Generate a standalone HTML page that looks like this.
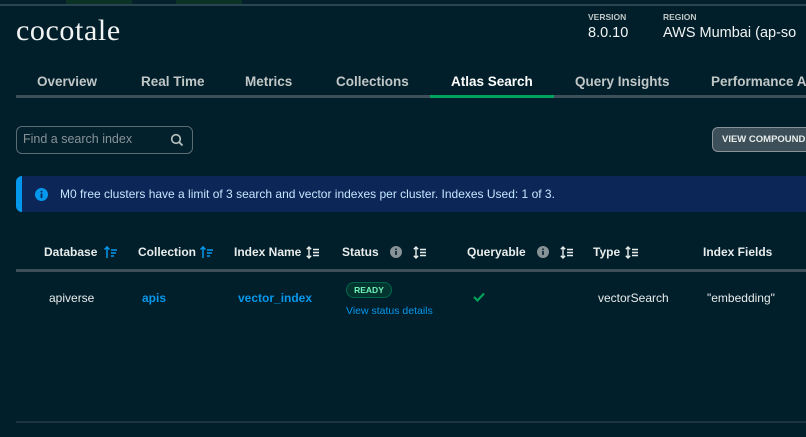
<!DOCTYPE html>
<html style="overflow:hidden"><head><meta charset="utf-8"><style>
*{margin:0;padding:0;box-sizing:border-box}
body{width:806px;height:437px;overflow:hidden;background:#011e2b;font-family:"Liberation Sans",sans-serif;color:#e8edeb}
#r{position:relative;width:806px;height:437px;overflow:hidden}
.a{position:absolute;white-space:nowrap}
.tab{position:absolute;white-space:nowrap;top:74px;font-size:13.5px;font-weight:bold;color:#c1c7c6}
.th{position:absolute;white-space:nowrap;top:245px;font-size:12px;font-weight:bold;color:#e8edeb}
.td{position:absolute;white-space:nowrap;top:291px;font-size:12px;color:#e8edeb}
.link{color:#0498ec;font-weight:bold}
.s{position:absolute}
</style></head><body><div id="r">
<div class="a" style="left:0;top:0;width:806px;height:4px;background:#04202c"></div>
<div class="a" style="left:66px;top:0;width:66px;height:4px;background:#0a3326"></div>
<div class="a" style="left:176px;top:0;width:66px;height:4px;background:#0a3326"></div>
<div class="a" style="left:0;top:4px;width:806px;height:2px;background:#2a4450"></div>

<div class="a" style="left:16px;top:14px;font-family:'Liberation Serif',serif;font-size:30px;letter-spacing:0.6px;color:#f2f4f3">cocotale</div>
<div class="a" style="left:588px;top:12px;font-size:8.5px;font-weight:bold;color:#c1c7c6">VERSION</div>
<div class="a" style="left:663px;top:12px;font-size:8.5px;font-weight:bold;color:#c1c7c6">REGION</div>
<div class="a" style="left:588px;top:25px;font-size:14.5px;color:#f2f4f3">8.0.10</div>
<div class="a" style="left:663px;top:25px;width:143px;overflow:hidden;font-size:14.5px;color:#f2f4f3">AWS Mumbai (ap-so</div>

<div class="tab" style="left:37px">Overview</div>
<div class="tab" style="left:141px">Real Time</div>
<div class="tab" style="left:245px">Metrics</div>
<div class="tab" style="left:336px">Collections</div>
<div class="tab" style="left:451px;color:#fff">Atlas Search</div>
<div class="tab" style="left:575px">Query Insights</div>
<div class="tab" style="left:711px;width:95px;overflow:hidden">Performance A</div>
<div class="a" style="left:16px;top:95px;width:790px;height:3px;background:#3d4f58"></div>
<div class="a" style="left:430px;top:95px;width:124px;height:3px;background:#00a35c"></div>

<div class="a" style="left:16px;top:126px;width:177px;height:28px;border:1px solid #5c6c75;border-radius:6px;background:#03202d"></div>
<div class="a" style="left:23px;top:132px;font-size:12.5px;color:#889397">Find a search index</div>
<svg class="a" style="left:170px;top:133px" width="14" height="14" viewBox="0 0 14 14"><circle cx="6" cy="6" r="4.3" fill="none" stroke="#b8c4c2" stroke-width="1.6"/><path d="M9 9l3.5 3.5" stroke="#b8c4c2" stroke-width="1.8"/></svg>

<div class="a" style="left:712px;top:127px;width:94px;height:25px;border:1px solid #889397;border-right:none;border-radius:6px 0 0 6px;background:#3d4f58;overflow:hidden"><span style="position:absolute;left:9px;top:6px;font-size:9.5px;font-weight:bold;color:#e8edeb">VIEW COMPOUND (</span></div>

<div class="a" style="left:16px;top:176px;width:790px;height:36px;background:#0c2657;border-radius:6px 0 0 6px;border-left:6px solid #0498ec"></div>
<svg class="a" style="left:35px;top:188px" width="13" height="13" viewBox="0 0 13 13"><circle cx="6.5" cy="6.5" r="6.5" fill="#0498ec"/><rect x="5.6" y="5.5" width="1.8" height="4.5" fill="#0c2657"/><circle cx="6.5" cy="3.6" r="1" fill="#0c2657"/></svg>
<div class="a" style="left:60px;top:187px;font-size:12px;color:#c3e7fe">M0 free clusters have a limit of 3 search and vector indexes per cluster. Indexes Used: 1 of 3.</div>

<div class="th" style="left:44px">Database</div>
<svg class="s" style="left:104px;top:246px" width="14" height="13" viewBox="0 0 14 13"><path d="M3 12V1M0.5 3.5L3 1l2.5 2.5" fill="none" stroke="#0498ec" stroke-width="1.5"/><path d="M7 4h6M7 7h5M7 10h3" stroke="#0498ec" stroke-width="1.5"/></svg>
<div class="th" style="left:138px">Collection</div>
<svg class="s" style="left:200px;top:246px" width="14" height="13" viewBox="0 0 14 13"><path d="M3 12V1M0.5 3.5L3 1l2.5 2.5" fill="none" stroke="#0498ec" stroke-width="1.5"/><path d="M7 4h6M7 7h5M7 10h3" stroke="#0498ec" stroke-width="1.5"/></svg>
<div class="th" style="left:234px">Index Name</div>
<svg class="s" style="left:306px;top:246px" width="14" height="13" viewBox="0 0 14 13"><path d="M3 1v11M0.8 3.2L3 1l2.2 2.2M0.8 9.8L3 12l2.2-2.2" fill="none" stroke="#e8edeb" stroke-width="1.4"/><path d="M7 3.5h6M7 6.5h6M7 9.5h6" stroke="#e8edeb" stroke-width="1.4"/></svg>
<div class="th" style="left:342px">Status</div>
<svg class="a" style="left:390px;top:246px" width="12" height="12"><circle cx="6" cy="6" r="6" fill="#889397"/><rect x="5.2" y="5" width="1.6" height="4" fill="#011e2b"/><circle cx="6" cy="3.3" r="0.9" fill="#011e2b"/></svg>
<svg class="s" style="left:413px;top:246px" width="14" height="13" viewBox="0 0 14 13"><path d="M3 1v11M0.8 3.2L3 1l2.2 2.2M0.8 9.8L3 12l2.2-2.2" fill="none" stroke="#e8edeb" stroke-width="1.4"/><path d="M7 3.5h6M7 6.5h6M7 9.5h6" stroke="#e8edeb" stroke-width="1.4"/></svg>
<div class="th" style="left:467px">Queryable</div>
<svg class="a" style="left:537px;top:246px" width="12" height="12"><circle cx="6" cy="6" r="6" fill="#889397"/><rect x="5.2" y="5" width="1.6" height="4" fill="#011e2b"/><circle cx="6" cy="3.3" r="0.9" fill="#011e2b"/></svg>
<svg class="s" style="left:560px;top:246px" width="14" height="13" viewBox="0 0 14 13"><path d="M3 1v11M0.8 3.2L3 1l2.2 2.2M0.8 9.8L3 12l2.2-2.2" fill="none" stroke="#e8edeb" stroke-width="1.4"/><path d="M7 3.5h6M7 6.5h6M7 9.5h6" stroke="#e8edeb" stroke-width="1.4"/></svg>
<div class="th" style="left:593px">Type</div>
<svg class="s" style="left:625px;top:246px" width="14" height="13" viewBox="0 0 14 13"><path d="M3 1v11M0.8 3.2L3 1l2.2 2.2M0.8 9.8L3 12l2.2-2.2" fill="none" stroke="#e8edeb" stroke-width="1.4"/><path d="M7 3.5h6M7 6.5h6M7 9.5h6" stroke="#e8edeb" stroke-width="1.4"/></svg>
<div class="th" style="left:703px">Index Fields</div>
<div class="a" style="left:16px;top:269px;width:790px;height:3px;background:#3d4f58"></div>

<div class="td" style="left:49px">apiverse</div>
<div class="td link" style="left:142px">apis</div>
<div class="td link" style="left:238px">vector_index</div>
<div class="a" style="left:346px;top:282px;width:46px;height:16px;border:1px solid #00684a;border-radius:8px;background:#023430;color:#71f6ba;font-size:8.5px;font-weight:bold;text-align:center;line-height:14px">READY</div>
<div class="a" style="left:346px;top:305px;font-size:10.5px;color:#0498ec">View status details</div>
<svg class="a" style="left:473px;top:292px" width="12" height="10" viewBox="0 0 12 10"><path d="M1 5l3.5 3.5L11 1.5" fill="none" stroke="#00a35c" stroke-width="2.2"/></svg>
<div class="td" style="left:598px">vectorSearch</div>
<div class="td" style="left:707px">"embedding"</div>

<div class="a" style="left:16px;top:421px;width:790px;height:2px;background:#1c3440"></div>
</div></body></html>
